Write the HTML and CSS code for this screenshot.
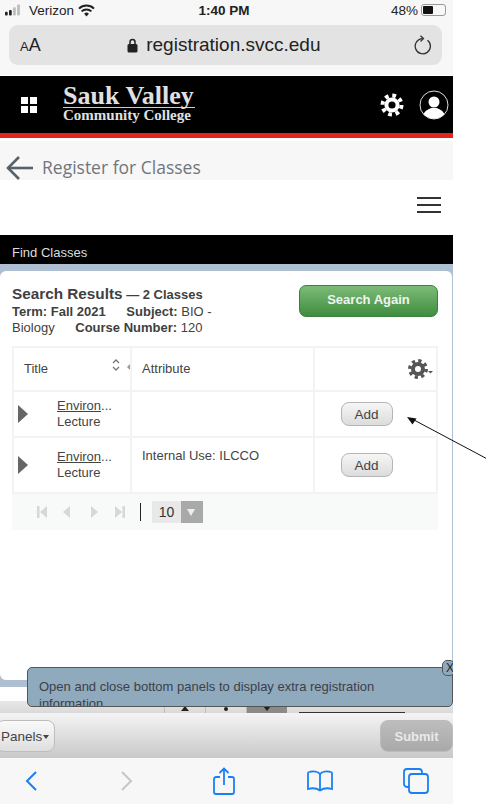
FILE: index.html
```html
<!DOCTYPE html>
<html lang="en">
<head>
  <meta charset="UTF-8" />
  <meta name="viewport" content="width=device-width, initial-scale=1" />
  <title>Register for Classes</title>
  <link rel="stylesheet" href="styles.css">
</head>
<body>

  <div class="phone">

    <!-- iOS status bar + address bar -->
    <div class="status-bar">
      <div class="status-left">
        <svg class="signal" width="20" height="12" viewBox="0 0 20 12">
          <rect x="0" y="8" width="3" height="4" rx="1" fill="#222"/>
          <rect x="4.500" y="6" width="3" height="6" rx="1" fill="#222"/>
          <rect x="9" y="3" width="3" height="9" rx="1" fill="#bbb"/>
          <rect x="13.500" y="0" width="3" height="12" rx="1" fill="#bbb"/>
        </svg>
        <span>Verizon</span>
        <svg width="17" height="13" viewBox="0 0 17 13" fill="none" stroke="#222" stroke-width="2">
          <path d="M1 4.600a10.800 10.800 0 0 1 15 0"/>
          <path d="M3.600 7.400a7 7 0 0 1 9.800 0"/>
          <path d="M8.500 12.400l2.400-2.600a3.400 3.400 0 0 0-4.800 0z" fill="#222" stroke="none"/>
        </svg>
      </div>
      <div class="status-time">1:40 PM</div>
      <div class="status-right">
        <span>48%</span>
        <div class="battery"><div class="battery-level"></div></div>
      </div>
    </div>

    <div class="address-wrap">
      <div class="address-bar">
        <span class="aa"><small>A</small>A</span>
        <div class="address-url">
          <svg width="11" height="15" viewBox="0 0 11 15">
            <path d="M3 6V4a2.500 2.500 0 0 1 5 0v2" fill="none" stroke="#222" stroke-width="1.500"/>
            <rect x="0.500" y="6" width="10" height="8.500" rx="1.500" fill="#222"/>
          </svg>
          <span>registration.svcc.edu</span>
        </div>
        <svg width="18" height="20" viewBox="0 0 18 20" fill="none" stroke="#333" stroke-width="1.300">
          <path d="M13.500 5.200a7.600 7.600 0 1 1-5-1.600"/>
          <path d="M6.500 0.800l3 2.800-3 2.800"/>
        </svg>
      </div>
    </div>

    <!-- College header -->
    <div class="college-header">
      <div class="app-grid">
        <span></span><span></span><span></span><span></span>
      </div>
      <div class="logo">
        <div class="logo-top">Sauk Valley</div>
        <div class="logo-bottom">Community College</div>
      </div>
      <div class="header-icons">
        <svg width="24" height="24" viewBox="0 0 24 24" fill="none" stroke="#fff">
          <circle cx="12" cy="12" r="5.600" stroke-width="4"/>
          <circle cx="12" cy="12" r="9.500" stroke-width="4" stroke-dasharray="3.730 3.730"/>
        </svg>
        <svg width="30" height="30" viewBox="0 0 30 30">
          <circle cx="15" cy="15" r="14" fill="#000" stroke="#ddd" stroke-width="1"/>
          <circle cx="15" cy="12" r="5.500" fill="#fff"/>
          <path d="M4.500 24c2-4 6-5 7.500-6h6c1.500 1 5.500 2 7.500 6a14 14 0 0 1-21 0z" fill="#fff"/>
        </svg>
      </div>
    </div>
    <div class="red-rule"></div>

    <div class="page-title">
      <svg width="28" height="26" viewBox="0 0 28 26" fill="none" stroke="#56616b" stroke-width="2.600">
        <path d="M27 13H2"/>
        <path d="M13 2L2 13l11 11"/>
      </svg>
      <span>Register for Classes</span>
    </div>

    <div class="menu-row">
      <div class="hamburger"><span></span><span></span><span></span></div>
    </div>

    <div class="section-bar">Find Classes</div>

    <!-- Results -->
    <div class="content">
      <div class="card">
        <div class="results-head">
          <div class="results-info">
            <div><span class="results-title">Search Results</span> <strong>— 2 Classes</strong></div>
            <div><strong>Term: Fall 2021</strong> <strong class="gap">Subject:</strong> BIO -</div>
            <div>Biology <strong class="gap">Course Number:</strong> 120</div>
          </div>
          <button class="search-again">Search Again</button>
        </div>

        <table class="results">
          <colgroup>
            <col class="col-title"><col class="col-attr"><col class="col-add">
          </colgroup>
          <thead>
            <tr>
              <th class="title-head">
                Title
                <svg class="sort" width="8" height="12" viewBox="0 0 8 12" fill="none" stroke="#777" stroke-width="1.300">
                  <path d="M1 4l3-3 3 3"/><path d="M1 8l3 3 3-3"/>
                </svg>
              </th>
              <th>Attribute</th>
              <th class="gear-cell">
                <svg width="26" height="22" viewBox="0 0 26 22" fill="none" stroke="#555">
                  <circle cx="10" cy="10" r="5" stroke-width="4"/>
                  <circle cx="10" cy="10" r="8.200" stroke-width="3.500" stroke-dasharray="3.220 3.220"/>
                  <path d="M20 12h5l-2.500 2.500z" fill="#555" stroke="none"/>
                </svg>
              </th>
            </tr>
          </thead>
          <tbody>
            <tr class="row-one">
              <td>
                <div class="title-cell">
                  <span class="expand"></span>
                  <div><a href="#">Environ</a>...<br>Lecture</div>
                </div>
              </td>
              <td></td>
              <td class="add-cell"><button class="add">Add</button></td>
            </tr>
            <tr class="row-two">
              <td>
                <div class="title-cell">
                  <span class="expand"></span>
                  <div><a href="#">Environ</a>...<br>Lecture</div>
                </div>
              </td>
              <td class="attr-top">Internal Use: ILCCO</td>
              <td class="add-cell"><button class="add">Add</button></td>
            </tr>
          </tbody>
        </table>

        <div class="pager">
          <svg width="94" height="14" viewBox="0 0 94 14" fill="#d4d8d8">
            <rect x="0" y="1" width="2.500" height="12"/><path d="M10 1v12L3 7z"/>
            <path d="M33 1v12L26 7z"/>
            <path d="M54 1v12l7-6z"/>
            <path d="M78 1v12l7-6z"/><rect x="85.500" y="1" width="2.500" height="12"/>
          </svg>
          <div class="pager-sep"></div>
          <div class="page-size">
            <span class="page-size-value">10</span>
            <span class="page-size-arrow"></span>
          </div>
        </div>
      </div>
    </div>

    <div class="panel-tabs">
      <div class="panel-tab"><span class="tab-up"></span></div>
      <div class="panel-tab"><span class="tab-dot"></span></div>
      <div class="panel-tab active"><span class="tab-down"></span></div>
      <div class="panel-line"></div>
    </div>

    <div class="footer-bar">
      <button class="panels-btn">Panels<span class="caret"></span></button>
      <button class="submit-btn">Submit</button>
    </div>

    <!-- Safari toolbar -->
    <div class="safari-bar">
      <div class="safari-item">
        <svg width="12" height="20" viewBox="0 0 12 20" fill="none" stroke="#1a7ff5" stroke-width="2">
          <path d="M11 1L2 10l9 9"/>
        </svg>
      </div>
      <div class="safari-item">
        <svg width="12" height="20" viewBox="0 0 12 20" fill="none" stroke="#c6c6c8" stroke-width="2">
          <path d="M1 1l9 9-9 9"/>
        </svg>
      </div>
      <div class="safari-item">
        <svg width="22" height="28" viewBox="0 0 22 28" fill="none" stroke="#1a7ff5" stroke-width="1.800">
          <path d="M7 10H3a2 2 0 0 0-2 2v13a2 2 0 0 0 2 2h16a2 2 0 0 0 2-2V12a2 2 0 0 0-2-2h-4"/>
          <path d="M11 18V1.500"/>
          <path d="M6.500 6L11 1.500 15.500 6"/>
        </svg>
      </div>
      <div class="safari-item">
        <svg width="26" height="22" viewBox="0 0 26 22" fill="none" stroke="#1a7ff5" stroke-width="1.800">
          <path d="M13 4c-2-2.500-7-3-11-2-.7.200-1 .700-1 1.300V19c3.500-1 8.500-1 12 1.500 3.500-2.500 8.500-2.500 12-1.500V3.300c0-.600-.3-1.100-1-1.300-4-1-9-.500-11 2z"/>
          <path d="M13 4v16"/>
        </svg>
      </div>
      <div class="safari-item">
        <svg width="26" height="26" viewBox="0 0 26 26" fill="none" stroke="#1a7ff5" stroke-width="1.800">
          <rect x="6" y="6" width="19" height="19" rx="3"/>
          <path d="M6 19H4a3 3 0 0 1-3-3V4a3 3 0 0 1 3-3h12a3 3 0 0 1 3 3v2"/>
        </svg>
      </div>
    </div>

    <!-- Tip floats over the bottom of the page -->
    <div class="tip">
      <div class="tip-text">Open and close bottom panels to display extra registration information.</div>
      <div class="tip-close">X</div>
    </div>
  </div>

  <!-- Annotation arrow drawn on top of the screenshot -->
  <svg class="annotation" width="90" height="50" viewBox="0 0 90 50" fill="none">
    <path d="M86 45L7 3" stroke="#111" stroke-width="1"/>
    <path d="M0 0l9.500 1.500-4 6z" fill="#111"/>
  </svg>

</body>
</html>
```

FILE: styles.css
```css
* {
  box-sizing: border-box;
}

html, body {
  margin: 0;
  height: 100%;
  background: #fff;
  overflow: hidden;
}

body {
  font-family: "Liberation Sans", Arial, sans-serif;
  color: #333;
}

button {
  font-family: inherit;
  padding: 0;
  cursor: pointer;
}

.phone {
  position: relative;
  width: 453px;
  height: 804px;
  display: flex;
  flex-direction: column;
  overflow: hidden;
  background: #fff;
}

/* status bar */
.status-bar {
  height: 25px;
  padding: 0 7px 5px 5px;
  background: #f7f7f7;
  display: flex;
  align-items: center;
  justify-content: space-between;
  font-size: 13.500px;
  color: #222;
  flex: none;
}

.status-left, .status-right {
  width: 150px;
  display: flex;
  align-items: center;
  gap: 4px;
}

.status-left .signal {
  width: 18px;
  margin-right: 2px;
}

.status-right {
  justify-content: flex-end;
  gap: 3px;
}

.status-time {
  font-weight: bold;
  font-size: 13.500px;
  margin-left: -3px;
}

.battery {
  width: 25px;
  height: 12px;
  border: 1px solid #999;
  border-radius: 3px;
  padding: 1px;
}

.battery-level {
  width: 46%;
  height: 100%;
  background: #111;
  border-radius: 1px;
}

.address-wrap {
  height: 50px;
  padding: 0 11px 0 9px;
  background: #f7f7f7;
  flex: none;
}

.address-bar {
  height: 40px;
  padding: 0 10px 0 11px;
  background: #e3e3e3;
  border-radius: 9px;
  display: flex;
  align-items: center;
  justify-content: space-between;
}

.aa {
  font-size: 18px;
  color: #222;
}

.aa small {
  font-size: 13px;
}

.address-url {
  display: flex;
  align-items: center;
  gap: 8px;
  font-size: 19px;
  color: #222;
  margin-left: -7px;
}

/* college header */
.college-header {
  height: 57px;
  margin-top: 1px;
  padding: 0 4px 0 21px;
  background: #000;
  display: flex;
  align-items: center;
  flex: none;
}

.app-grid {
  width: 16px;
  display: grid;
  grid-template-columns: 7px 7px;
  gap: 2px;
}

.app-grid span {
  height: 7px;
  background: #fff;
}

.logo {
  margin: 0 0 2px 26px;
  color: #e0e0e0;
  font-family: "Liberation Serif", "Times New Roman", serif;
  font-weight: bold;
}

.logo-top {
  font-size: 26px;
  line-height: 22px;
  width: 132px;
  border-bottom: 1.500px solid #ccc;
  white-space: nowrap;
}

.logo-bottom {
  font-size: 15px;
  line-height: 14px;
  white-space: nowrap;
}

.header-icons {
  margin-left: auto;
  display: flex;
  align-items: center;
  gap: 15px;
}

.red-rule {
  height: 5px;
  background: #e2231f;
  flex: none;
}

.page-title {
  height: 39px;
  margin-top: 3px;
  padding: 14px 0 0 6px;
  background: #f7f7f7;
  display: flex;
  align-items: flex-start;
  gap: 8px;
  font-family: "Open Sans", sans-serif;
  font-size: 17.500px;
  color: #70767b;
  overflow: hidden;
  flex: none;
}

.menu-row {
  height: 55px;
  padding: 17px 12px 0 0;
  display: flex;
  justify-content: flex-end;
  flex: none;
}

.hamburger {
  width: 24px;
  display: flex;
  flex-direction: column;
  gap: 5px;
}

.hamburger span {
  height: 2px;
  background: #333;
}

.section-bar {
  height: 29px;
  padding: 10px 0 0 12px;
  background: #000;
  color: #ddd;
  font-size: 13px;
  flex: none;
}

/* results */
.content {
  height: 423px;
  padding-top: 7px;
  background: #adbfd0;
  flex: none;
  border-bottom: 7px solid #adbfd0;
}

.card {
  height: 409px;
  padding: 15px 14px 0 12px;
  background: #fff;
  border-right: 1px solid #adbfd0;
  border-radius: 6px;
}

.results-head {
  height: 60px;
  display: flex;
  justify-content: space-between;
  align-items: flex-start;
  font-size: 13px;
  line-height: 16.500px;
}

.results-info {
  width: 225px;
  color: #3f3f3f;
}

.results-title {
  font-size: 15.300px;
  font-weight: bold;
}

.gap {
  margin-left: 17px;
}

.search-again {
  width: 139px;
  height: 32px;
  margin-top: -1px;
  padding-bottom: 3px;
  border: 1px solid #3d7f3d;
  border-radius: 7px;
  background: linear-gradient(#7dbb78, #3f8d3f);
  color: #eef5ee;
  font-size: 13px;
  font-weight: bold;
}

.results {
  width: 426px;
  table-layout: fixed;
  border-collapse: collapse;
  font-size: 13px;
  color: #444;
}

.col-title {
  width: 118px;
}

.col-attr {
  width: 183px;
}

.results th, .results td {
  border: 2px solid #f2f3f3;
  padding: 0 0 0 10px;
}

.results th {
  height: 44px;
  padding-bottom: 2px;
  font-weight: normal;
  text-align: left;
  position: relative;
}

.sort {
  position: absolute;
  right: 10px;
  top: 11px;
}

.title-head::after {
  content: "";
  position: absolute;
  right: 0;
  top: 16px;
  border-right: 3px solid #999;
  border-top: 3px solid transparent;
  border-bottom: 3px solid transparent;
}

.results th.gear-cell {
  text-align: right;
  padding: 5px 2px 0 0;
}

.row-one td {
  height: 46px;
}

.row-two td {
  height: 56px;
}

.results td {
  line-height: 16.500px;
}

.results td.attr-top {
  vertical-align: top;
  padding-top: 10px;
}

.title-cell {
  display: flex;
  align-items: center;
  gap: 29px;
  margin-left: -6px;
}

.title-cell a {
  color: #444;
}

.expand {
  width: 0;
  height: 0;
  border-left: 10px solid #666;
  border-top: 9px solid transparent;
  border-bottom: 9px solid transparent;
}

.add-cell {
  text-align: center;
}

.results td.add-cell {
  padding: 0 18px 0 0;
}

.add {
  width: 52px;
  height: 24px;
  border: 1px solid #b5b5b5;
  border-radius: 8px;
  background: linear-gradient(#f6f6f6, #dcdcdc);
  color: #444;
  font-size: 13.500px;
}

.pager {
  width: 426px;
  height: 36px;
  padding: 0 0 0 25px;
  background: #f8f9f9;
  display: flex;
  align-items: center;
}

.pager-sep {
  width: 1px;
  height: 18px;
  margin: 0 11px 0 9px;
  background: #222;
}

.page-size {
  width: 51px;
  height: 22px;
  display: flex;
  font-size: 14px;
  color: #333;
}

.page-size-value {
  width: 29px;
  padding-top: 3px;
  text-align: center;
  background: #e8e8e8;
}

.page-size-arrow {
  width: 22px;
  background: #a9a9a9;
  position: relative;
}

.page-size-arrow::after {
  content: "";
  position: absolute;
  left: 6px;
  top: 8px;
  border-top: 7px solid #eee;
  border-left: 4px solid transparent;
  border-right: 4px solid transparent;
}

/* bottom of page */
.panel-tabs {
  height: 26px;
  padding: 14px 0 0 164px;
  background: linear-gradient(#fff 0, #fff 14px, #e8e8e8 14px, #d9d9d9 100%);
  display: flex;
  flex: none;
}

.panel-tab {
  width: 41px;
  border-left: 1px solid #bbb;
  display: flex;
  justify-content: center;
  align-items: flex-end;
  padding-bottom: 2px;
}

.panel-tab.active {
  background: #8a8a8a;
}

.tab-up {
  border-bottom: 5px solid #222;
  border-left: 4px solid transparent;
  border-right: 4px solid transparent;
}

.tab-dot {
  width: 4px;
  height: 4px;
  border-radius: 50%;
  background: #222;
}

.tab-down {
  border-top: 5px solid #222;
  border-left: 4px solid transparent;
  border-right: 4px solid transparent;
}

.panel-line {
  width: 106px;
  height: 1px;
  margin: 11px 0 0 12px;
  background: #333;
}

.footer-bar {
  height: 45px;
  padding: 7px 0 0;
  background: linear-gradient(#f4f4f4, #c9c9c9);
  display: flex;
  justify-content: space-between;
  align-items: flex-start;
  flex: none;
}

.panels-btn {
  width: 59px;
  height: 32px;
  margin-left: -4px;
  padding-left: 4px;
  border: 1px solid #bdbdbd;
  border-radius: 8px;
  background: linear-gradient(#fafafa, #dedede);
  color: #444;
  font-size: 13.500px;
  text-align: left;
}

.caret {
  display: inline-block;
  margin-left: 1px;
  vertical-align: 2px;
  border-top: 4px solid #444;
  border-left: 3.500px solid transparent;
  border-right: 3.500px solid transparent;
}

.submit-btn {
  width: 73px;
  height: 32px;
  border: 1px solid #bcbcbc;
  border-radius: 8px;
  background: linear-gradient(#bdbdbd, #a9a9a9);
  color: #e9e9e9;
  font-size: 13px;
  font-weight: bold;
}

.safari-bar {
  height: 46px;
  padding: 0 22px 0 16px;
  background: #f7f7f7;
  display: flex;
  align-items: center;
  justify-content: space-between;
  flex: none;
}

.safari-item {
  width: 30px;
  display: flex;
  justify-content: center;
}

/* floating tip */
.tip {
  position: absolute;
  left: 27px;
  top: 667px;
  width: 426px;
  height: 40px;
  padding: 10px 0 0 11px;
  background: #8fa9bd;
  border: 1px solid #555;
  border-radius: 5px;
  font-size: 13px;
  line-height: 17px;
  color: #3c4148;
}

.tip-text {
  width: 360px;
  height: 28px;
  overflow: hidden;
}

.tip-close {
  position: absolute;
  right: -3px;
  top: -8px;
  width: 13px;
  height: 16px;
  padding-left: 3px;
  background: #8fa9bd;
  border: 1px solid #555;
  border-radius: 5px;
  font-size: 12px;
  line-height: 14px;
  color: #222;
}

.annotation {
  position: absolute;
  left: 407px;
  top: 417px;
}
```
